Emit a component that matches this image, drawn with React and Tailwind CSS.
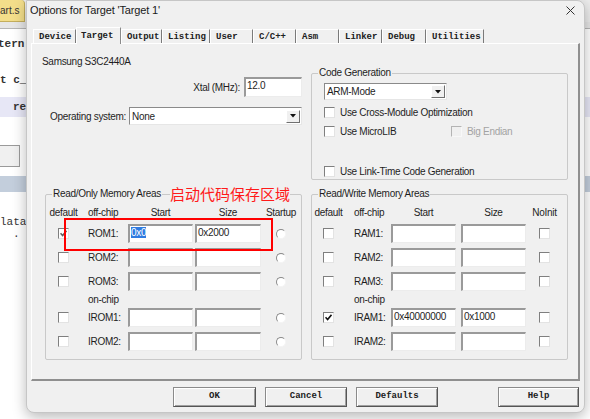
import React from "react";

const ui = "font-['Liberation_Sans',Arial,sans-serif] text-[10px] tracking-[-0.3px] text-[#1e1e1e]";
const mono = "font-['Liberation_Mono','Courier_New',monospace] font-bold text-[9px] text-[#202020]";

function Check({ checked, dim }) {
  return (
    <div className="w-[11px] h-[11px] bg-white border border-t-[#7f7f7f] border-l-[#7f7f7f] border-r-[#e3e3e3] border-b-[#e3e3e3] flex items-center justify-center">
      {checked && (
        <svg width="7" height="7" viewBox="0 0 7 7">
          <path d="M0.5 3.2 L2.6 5.5 L6.5 0.8" stroke={dim ? "#606060" : "#111"} strokeWidth="1.6" fill="none" />
        </svg>
      )}
    </div>
  );
}

function Radio() {
  return <div className="w-[10px] h-[10px] rounded-full bg-white border border-t-[#8a8a8a] border-l-[#8a8a8a] border-r-[#f4f4f4] border-b-[#f4f4f4]" />;
}

function Box({ w, h = "h-[19px]", children }) {
  return (
    <div className={`${w} ${h} shrink-0 bg-white border-t-2 border-l-2 border-r border-b border-t-[#9a9a9a] border-l-[#9a9a9a] border-r-[#ececec] border-b-[#ececec] pl-[1px] pt-[1px] leading-[12px] whitespace-nowrap ${ui}`}>
      {children}
    </div>
  );
}

function Select({ w, h, children }) {
  return (
    <div className={`${w} ${h} shrink-0 bg-white border border-t-[#8a8a8a] border-l-[#8a8a8a] border-r-[#e6e6e6] border-b-[#e6e6e6] flex items-center pl-[2px] pr-[1px] ${ui}`}>
      <span className="flex-1">{children}</span>
      <div className="w-[14px] h-[13px] bg-[#f0f0f0] border border-t-white border-l-white border-r-[#707070] border-b-[#707070] flex items-center justify-center">
        <svg width="6" height="4" viewBox="0 0 6 4"><path d="M0 0 H6 L3 3.5 Z" fill="#111" /></svg>
      </div>
    </div>
  );
}

function Group({ title, className, children }) {
  return (
    <div className={`relative border border-[#c9c9c9] rounded-[2px] ${className}`}>
      <span className={`absolute left-[6px] -top-[8px] px-[1px] bg-[#f0f0f0] leading-[14px] ${ui}`}>{title}</span>
      {children}
    </div>
  );
}

const leftCols = {
  c1: "w-[35px]", c2: "w-[47px] pl-[7px]", c3: "w-[65px]", gap: "w-[2px]", c4: "w-[66px]", c5: "w-[40px]",
};
const rightCols = {
  c1: "w-[33px]", c2: "w-[46px] pl-[9px]", c3: "w-[65px]", gap: "w-[5px]", c4: "w-[65px]", c5: "w-[41px] pr-[4px]",
};

function MemRow({ cols, label, def, dim, start, size, last, className }) {
  return (
    <div className={`flex items-center h-[19px] ${className}`}>
      <div className={`${cols.c1} flex justify-center`}><Check checked={def} dim={dim} /></div>
      <div className={`${cols.c2} ${ui}`}>{label}</div>
      <Box w={cols.c3}>{start}</Box>
      <div className={cols.gap} />
      <Box w={cols.c4}>{size}</Box>
      <div className={`${cols.c5} flex justify-center`}>{last}</div>
    </div>
  );
}

function MemHeader({ cols, lastLabel }) {
  return (
    <div className={`flex items-center h-[14px] mt-[10px] ${ui}`}>
      <div className={`${cols.c1} text-center`}>default</div>
      <div className={cols.c2}>off-chip</div>
      <div className={`${cols.c3} text-center`}>Start</div>
      <div className={cols.gap} />
      <div className={`${cols.c4} text-center`}>Size</div>
      <div className={`${cols.c5} text-center`}>{lastLabel}</div>
    </div>
  );
}

function OnChip({ cols }) {
  return (
    <div className={`flex items-center h-[17px] ${ui}`}>
      <div className={cols.c1} />
      <div className={cols.c2}>on-chip</div>
    </div>
  );
}

const tabs = [
  { name: "Device", w: "w-[43px]" },
  { name: "Target", w: "w-[45px]", active: true },
  { name: "Output", w: "w-[41px]" },
  { name: "Listing", w: "w-[48px]" },
  { name: "User", w: "w-[43px]" },
  { name: "C/C++", w: "w-[43px]" },
  { name: "Asm", w: "w-[43px]" },
  { name: "Linker", w: "w-[43px]" },
  { name: "Debug", w: "w-[44px]" },
  { name: "Utilities", w: "w-[58px]" },
];

function Button({ w, className, children }) {
  return (
    <div className={`${w} h-[20px] flex items-center justify-center border border-[#8a8a8a] border-r-[#555] border-b-[#555] shadow-[inset_1px_1px_0_#fff,inset_-1px_-1px_0_#a0a0a0] bg-[#f0f0f0] ${mono} ${className}`}>
      {children}
    </div>
  );
}

export default function App() {
  return (
    <div className="relative w-[590px] h-[419px] overflow-hidden bg-[#f2f2f2]">
      {/* editor behind the dialog */}
      <div className="flex flex-col h-full bg-white">
        <div className="h-[22px] bg-[#ececec] flex">
          <div className="w-[25px] h-[22px] bg-[#f3de8a] border-r border-b border-[#c4ae5c] rounded-tr-[4px] flex items-end pb-[3px] font-['Liberation_Sans',sans-serif] text-[10px] text-[#333]">
            art.s
          </div>
        </div>
        <div className="h-[7px] bg-[#e6e6e6] border-b border-[#b5b5b5]" />
        <div className="mt-[7px] h-[16px] leading-[16px] pl-0 font-['Liberation_Mono',monospace] font-bold text-[11px] text-[#333] -ml-[2px]">tern</div>
        <div className="mt-[20px] h-[16px] leading-[16px] font-['Liberation_Mono',monospace] font-bold text-[11px] text-[#333]">t c_</div>
        <div className="mt-[9px] h-[20px] leading-[20px] bg-[#e7e7f6] pl-[13px] font-['Liberation_Mono',monospace] font-bold text-[11px] text-[#333]">re</div>
        <div className="mt-[28px] h-[22px] w-[20px] bg-[#f0f0f0] border border-l-0 border-[#9a9a9a]" />
        <div className="mt-[9px] h-[16px] bg-[#c3cedc]" />
        <div className="mt-[23px] h-[14px] leading-[14px] font-['Liberation_Mono',monospace] text-[11px] text-[#333]">lata</div>
        <div className="h-[14px] leading-[10px] pl-[13px] font-['Liberation_Mono',monospace] text-[11px] text-[#333]">.</div>
      </div>

      {/* dialog window */}
      <div className="absolute left-[26px] top-0 w-[559px] h-[413px] bg-[#f0f0f0] border border-[#c6c6c6] rounded-b-[8px] rounded-tr-[8px] shadow-[0_4px_14px_rgba(0,0,0,0.28)] flex flex-col">
        <div className="h-[18px] flex items-center pl-[3px]">
          <span className="font-['Liberation_Sans',Arial,sans-serif] text-[11px] tracking-[-0.15px] text-[#1a1a1a]">Options for Target 'Target 1'</span>
          <svg className="ml-auto mr-[9px]" width="9" height="9" viewBox="0 0 9 9">
            <path d="M0.5 0.5 L8.5 8.5 M8.5 0.5 L0.5 8.5" stroke="#333" strokeWidth="1" />
          </svg>
        </div>

        {/* tabs */}
        <div className="h-[24px] flex items-end pl-[6px] relative z-10">
          {tabs.map((t) =>
            t.active ? (
              <div key={t.name} className={`${t.w} h-[17px] -mb-[1px] bg-[#f0f0f0] border-l border-t border-white border-r border-r-[#8a8a8a] pl-[4px] pt-[2px] ${mono}`}>
                {t.name}
              </div>
            ) : (
              <div key={t.name} className={`${t.w} h-[14px] border-t border-l border-white border-r border-r-[#7a7a7a] pl-[5px] pt-[1px] ${mono}`}>
                {t.name}
              </div>
            )
          )}
        </div>

        {/* tab page */}
        <div className="ml-[4px] w-[549px] h-[338px] border-t border-l border-white border-r-2 border-b-2 border-r-[#8f8f8f] border-b-[#8f8f8f] pl-[10px] pt-[11px]">
          <div className={`h-[14px] leading-[14px] ${ui}`}>Samsung S3C2440A</div>

          <div className="flex">
            <div className="w-[260px] flex flex-col">
              <div className="mt-[8px] h-[20px] flex items-center justify-end gap-[4px]">
                <span className={ui}>Xtal (MHz):</span>
                <Box w="w-[58px]" h="h-[20px]">12.0</Box>
              </div>
              <div className="mt-[10px] h-[18px] flex items-center pl-[8px]">
                <span className={ui}>Operating system:</span>
                <div className="ml-auto"><Select w="w-[173px]" h="h-[18px]">None</Select></div>
              </div>
            </div>

            <Group title="Code Generation" className="ml-[9px] mt-[4px] w-[257px] h-[107px] pl-[12px] pt-[9px]">
              <Select w="w-[123px]" h="h-[17px]">ARM-Mode</Select>
              <div className="mt-[5px] h-[14px] flex items-center gap-[5px]">
                <Check />
                <span className={ui}>Use Cross-Module Optimization</span>
              </div>
              <div className="mt-[5px] h-[14px] flex items-center">
                <div className="w-[127px] flex items-center gap-[5px]">
                  <Check />
                  <span className={ui}>Use MicroLIB</span>
                </div>
                <div className="w-[11px] h-[11px] bg-[#f0f0f0] border border-t-[#b4b4b4] border-l-[#b4b4b4] border-r-[#f8f8f8] border-b-[#f8f8f8]" />
                <span className={`ml-[5px] font-['Liberation_Sans',Arial,sans-serif] text-[10px] tracking-[-0.3px] text-[#a3a3a3]`}>Big Endian</span>
              </div>
              <div className="mt-[26px] h-[14px] flex items-center gap-[5px]">
                <Check />
                <span className={ui}>Use Link-Time Code Generation</span>
              </div>
            </Group>
          </div>

          <div className="mt-[14px] flex">
            <Group title="Read/Only Memory Areas" className="ml-[3px] w-[257px] h-[166px]">
              <MemHeader cols={leftCols} lastLabel="Startup" />
              <MemRow cols={leftCols} className="mt-[5px]" label="ROM1:" def dim start={<span className="bg-[#2f7be0] text-white">0x0</span>} size="0x2000" last={<Radio />} />
              <MemRow cols={leftCols} className="mt-[5px]" label="ROM2:" last={<Radio />} />
              <MemRow cols={leftCols} className="mt-[5px]" label="ROM3:" last={<Radio />} />
              <OnChip cols={leftCols} />
              <MemRow cols={leftCols} label="IROM1:" last={<Radio />} />
              <MemRow cols={leftCols} className="mt-[5px]" label="IROM2:" last={<Radio />} />

              {/* annotation overlay */}
              <div className="absolute left-[18px] top-[23px] w-[209px] h-[33px] border-2 border-[#ff0000]" />
              <span className="absolute left-[124px] -top-[10px] leading-[18px] text-[15px] text-[#ff1a1a] font-['Noto_Sans_CJK_SC',sans-serif] bg-[#f0f0f0]">
                启动代码保存区域
              </span>
            </Group>

            <Group title="Read/Write Memory Areas" className="ml-[9px] w-[257px] h-[166px]">
              <MemHeader cols={rightCols} lastLabel="NoInit" />
              <MemRow cols={rightCols} className="mt-[5px]" label="RAM1:" last={<Check />} />
              <MemRow cols={rightCols} className="mt-[5px]" label="RAM2:" last={<Check />} />
              <MemRow cols={rightCols} className="mt-[5px]" label="RAM3:" last={<Check />} />
              <OnChip cols={rightCols} />
              <MemRow cols={rightCols} label="IRAM1:" def start="0x40000000" size="0x1000" last={<Check />} />
              <MemRow cols={rightCols} className="mt-[5px]" label="IRAM2:" last={<Check />} />
            </Group>
          </div>
        </div>

        {/* buttons */}
        <div className="mt-[6px] flex justify-end pr-[5px]">
          <Button w="w-[83px]">OK</Button>
          <Button w="w-[82px]" className="ml-[9px]">Cancel</Button>
          <Button w="w-[82px]" className="ml-[9px]">Defaults</Button>
          <Button w="w-[81px]" className="ml-[60px]">Help</Button>
        </div>
      </div>
    </div>
  );
}
